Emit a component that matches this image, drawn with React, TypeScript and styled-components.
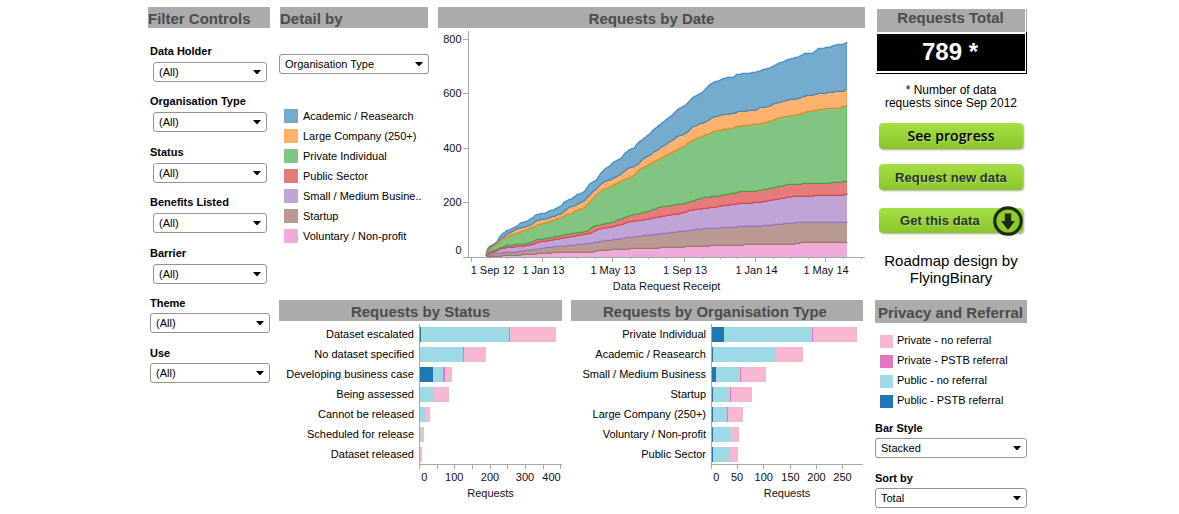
import React from 'react';
import styled, { createGlobalStyle } from 'styled-components';

const GlobalStyle = createGlobalStyle`
  * { box-sizing: border-box; }
  body { margin: 0; background: #fff; overflow: hidden; }
`;

const Page = styled.main`
  display: flex;
  width: 1179px;
  height: 514px;
  padding: 7px 0 0 148px;
  background: #fff;
  color: #000;
  font: 11px/12px "Liberation Sans", Arial, sans-serif;
  white-space: nowrap;
`;

const Heading = styled.h2<{ $align?: string; $h?: number; $shift?: number }>`
  margin: 0;
  height: ${p => p.$h ?? 21}px;
  padding-right: ${p => p.$shift ?? 0}px;
  line-height: ${p => (p.$h ?? 21) + 3}px;
  background: #ababab;
  color: #4b4b4b;
  font-size: 15px;
  font-weight: 700;
  text-align: ${p => p.$align ?? 'center'};
`;

const FilterColumn = styled.aside`
  width: 122px;
  margin-right: 9px;
`;

const Filter = styled.div<{ $top: number; $labelH?: number; $indent?: number; $left?: number }>`
  margin: ${p => p.$top}px 0 0 ${p => p.$left ?? 2}px;
  display: grid;
  grid-template-rows: ${p => p.$labelH ?? 17}px 20px;
  > :last-child { margin-left: ${p => p.$indent ?? 0}px; }
`;

const FilterLabel = styled.label`
  font-weight: 700;
`;

const SelectBox = styled.div<{ $width: number }>`
  display: flex;
  align-items: center;
  justify-content: space-between;
  width: ${p => p.$width}px;
  height: 20px;
  padding: 0 5px;
  border: 1px solid #949494;
  border-radius: 3px;
  background: #fff;
`;

const Select = ({ value, width }: { value: string; width: number }) => (
  <SelectBox $width={width}>
    <span>{value}</span>
    <svg width="8" height="4" viewBox="0 0 8 4"><path d="M0 0H8L4.5 4H3.5Z" fill="#000" /></svg>
  </SelectBox>
);

const Center = styled.div`
  width: 586px;
  margin-right: 10px;
`;

const TopRow = styled.div`
  display: flex;
  justify-content: space-between;
  height: 293px;
`;

const DetailPanel = styled.section`
  width: 150px;
  > ${Heading} { margin: 0 1px 26px; }
`;

const DatePanel = styled.section`
  width: 427px;
`;

const Legend = styled.ul<{ $size: number; $gap: number }>`
  list-style: none;
  margin: 0;
  padding: 0;
  li {
    display: flex;
    align-items: center;
    gap: ${p => p.$gap}px;
    height: 20px;
  }
  i {
    width: ${p => p.$size}px;
    height: ${p => p.$size}px;
  }
`;

const DetailLegend = styled(Legend)`
  margin: 32px 0 0 5px;
`;

const PrivacyLegend = styled(Legend)`
  margin: 8px 0 0 5px;
  span { margin-top: -2px; }
`;

const Swatch = styled.i<{ $color: string }>`
  background: ${p => p.$color};
`;

const BottomRow = styled.div`
  display: flex;
  gap: 9px;
`;

const BarPanel = styled.section<{ $width: number }>`
  width: ${p => p.$width}px;
`;

const Rows = styled.div`
  display: grid;
  grid-template-columns: 140px 1fr;
  margin-top: 3px;
`;

const RowLabels = styled.div`
  padding-right: 5px;
  text-align: right;
  line-height: 20px;
`;

const Plot = styled.div`
  height: 140px;
  border-left: 1px solid #a8a8a8;
`;

const Bar = styled.div`
  display: flex;
  height: 15px;
  margin: 3px 0 5px;
`;

const Segment = styled.span<{ $color: string; $width: number }>`
  width: ${p => p.$width}px;
  background: ${p => p.$color};
`;

const Side = styled.aside`
  width: 152px;
`;

const TotalTop = styled.div`
  margin: 2px 0 0 2px;
  height: 23px;
  width: 150px;
  padding-right: 1px;
  border-right: 1px solid #ababab;
  > ${Heading} { line-height: 18px; }
`;

const TotalFrame = styled.div`
  width: 151px;
  height: 42px;
  margin-left: 1px;
  padding: 2px 1px 2px 1px;
  border-right: 1px solid #000;
  border-bottom: 1px solid #000;
`;

const TotalValue = styled.div`
  height: 37px;
  padding-right: 2px;
  background: #000;
  color: #fff;
  font-size: 24px;
  font-weight: 700;
  line-height: 35px;
  text-align: center;
`;

const Note = styled.p`
  margin: 10px 0 0;
  font-size: 12px;
  line-height: 13px;
  text-align: center;
`;

const Credit = styled.p`
  margin: 19px 0 14px;
  font-size: 15px;
  line-height: 17px;
  text-align: center;
`;

const Button = styled.button<{ $top: number; $h: number }>`
  display: flex;
  align-items: center;
  justify-content: center;
  width: 144px;
  height: ${p => p.$h}px;
  margin: ${p => p.$top}px 0 0 4px;
  padding: 0;
  border: 0;
  border-radius: 4px;
  background: linear-gradient(#a5df43, #8ac52a);
  box-shadow: 1px 1px 2px rgba(0, 0, 0, 0.35);
  color: #2c3222;
  font: 700 13px "Liberation Sans", Arial, sans-serif;
  letter-spacing: 0.08px;
  text-shadow: 1px 1px 1px rgba(255, 255, 255, 0.35);
`;

const ProgressButton = styled(Button)`
  padding-bottom: 2px;
  color: #000;
  font: 600 14px "Open Sans", "Noto Sans", sans-serif;
`;

const DownloadButton = styled(Button)`
  justify-content: flex-start;
  padding-left: 21px;
  gap: 13px;
  svg { flex: none; }
`;

const C = { pn: '#f7b6d2', pp: '#e377c2', un: '#9edae5', up: '#1f77b4' };

const AREA_LEGEND: [string, string][] = [
  ['Academic / Reasearch', '#76abd0'],
  ['Large Company (250+)', '#ffb26e'],
  ['Private Individual', '#80c680'],
  ['Public Sector', '#e67b7c'],
  ['Small / Medium Busine..', '#bea4d7'],
  ['Startup', '#b99a93'],
  ['Voluntary / Non-profit', '#eeabda'],
];

const PRIVACY: [string, string][] = [
  ['Private - no referral', C.pn],
  ['Private - PSTB referral', C.pp],
  ['Public - no referral', C.un],
  ['Public - PSTB referral', C.up],
];

/* Upper edge of each stacked band, from the top band to the bottom one. */
const AREAS = [
  { fill: '#76abd0', line: '#4a8fc3', pts: '486,254 487,249 489,247 491,245 495,243 498,240 500,236 503,233 507,230 511,229 517,226 520,223 527,221 532,218 537,214 545,213 549,211 555,209 561,206 565,201 571,199 576,195 585,191 590,183 596,180 603,170 608,167 613,162 620,159 624,154 630,149 634,148 638,143 645,137 648,135 655,128 663,122 673,114 679,108 685,105 693,97 702,92 707,88 711,83 717,81 727,77 734,76.5 737,74 747,73 760,71 763,69 769,68 775,64.5 783,61.5 787,59.5 797,57 806,53 813,52.5 819,48 830,47 834,45 844,43.5 847,42' },
  { fill: '#ffb26e', line: '#4f86ac', pts: '486,255 488,250 492,246 498,241 502,238 510,232 519,228 530,225 537,220 545,219 555,215.5 562,213 567,208.5 577,204 585,200 593,191.5 598,187 603,182.5 613,178 618,176 628,168 637,165 645,157 650,154.5 657,150 668,142.5 679,135.5 686,133 693,126.5 703,122.5 712,117.5 725,114 735,113 737,111.5 757,109.5 759,107.5 770,106 775,103 790,99 797,98.5 807,95 813,95 817,93.5 840,91 844,91 847,89' },
  { fill: '#80c680', line: '#dc8c22', pts: '486,256 489,250 492,248 498,242 502,239 510,235 525,230 540,224 552,220.5 563,216.5 577,210.5 586,206 593,198 602,190 613,185.5 623,180 634,175 642,167.5 652,162.5 667,155 677,150 684,146 692,140 710,133 715,131 733,127.5 736,126 757,124 768,122 775,118.5 793,115 800,114 807,111 813,111 818,109 840,107.5 847,105' },
  { fill: '#e67b7c', line: '#4a9c4a', pts: '486,256 490,252 498,248.5 507,245 527,243.5 537,239.5 553,237 568,234 587,231 593,226 612,222 630,215.5 648,211 662,206.5 685,203 703,197.5 720,195.5 740,191.5 757,190.5 773,187.5 788,184.5 810,183 830,182.5 847,181' },
  { fill: '#bea4d7', line: '#d5484e', pts: '486,256 490,253 502,248 530,245 537,242 557,239 577,235.5 590,233 600,228.5 612,226.5 630,221.5 648,219 662,216 682,213 690,210 720,206 737,203.5 760,202 773,199.5 790,196.5 827,195 843,195 847,193.5' },
  { fill: '#b99a93', line: '#9873bb', pts: '486,257 493,253 513,252 540,248.5 553,246.5 573,245 593,242.5 612,239.5 630,237 648,235 673,232 703,228.5 737,226.5 763,225.5 783,223.5 800,222 847,221.5' },
  { fill: '#eeabda', line: '#a0756c', pts: '486,257 490,256 513,255 537,253.5 558,252 590,252 600,250 630,248.5 660,247.5 685,246.5 710,245.5 743,244.5 745,244 795,243.5 800,242.5 847,242' },
];

const steppedEdge = (pts: string) => {
  const p = pts.split(' ').map(s => s.split(',').map(Number));
  const out: string[] = [];
  let k = 0;
  for (let x = p[0][0]; x <= 847; x += 1.9) {
    while (k < p.length - 2 && p[k + 1][0] < x) k++;
    const [x0, y0] = p[k];
    const [x1, y1] = p[k + 1];
    const y = y0 + ((y1 - y0) * (x - x0)) / (x1 - x0);
    out.push(`${x.toFixed(1)} ${Math.round(y) + 0.3}`);
  }
  out.push(`847 ${p[p.length - 1][1]}`);
  return 'M' + out.join('L');
};

const MAJOR = [471, 542, 612, 684, 755, 825];
const MINOR = [489, 507, 524, 560, 577, 595, 630, 648, 666, 702, 720, 737, 773, 790, 808, 843, 861];
const X_LABELS: [string, number][] = [['1 Sep 12', 492.7], ['1 Jan 13', 543.5], ['1 May 13', 613], ['1 Sep 13', 685], ['1 Jan 14', 756.5], ['1 May 14', 826]];
const Y_LABELS: [string, number, number][] = [['800', 43, 39], ['600', 97, 93], ['400', 152, 148], ['200', 206, 202], ['0', 254, 257]];

const ChartSvg = styled.svg`
  display: block;
  font: 11px "Liberation Sans", Arial, sans-serif;
  text { fill: #111; }
`;

const DateChart = () => (
  <ChartSvg width="427" height="266" viewBox="438 28 427 266">
    {AREAS.map(a => {
      const edge = steppedEdge(a.pts);
      return (
        <g key={a.fill}>
          <path d={`${edge}V257H486Z`} fill={a.fill} />
          <path d={edge} fill="none" stroke={a.line} strokeWidth="1.3" strokeLinejoin="round" />
        </g>
      );
    })}
    <path d="M846.5 42V89" stroke="#5d9dcb" />
    <path d="M846.5 89V105" stroke="#f5a04f" />
    <path d="M846.5 105V181" stroke="#66b766" />
    <g stroke="#a8a8a8" shapeRendering="crispEdges">
      <path d="M468.5 31V257M463 257.5H865" />
      {Y_LABELS.map(([t, , y]) => <path key={t} d={`M463 ${y + 0.5}H468`} />)}
      {MAJOR.map(x => <path key={x} d={`M${x + 0.5} 258V262`} />)}
      {MINOR.map(x => <path key={x} d={`M${x + 0.5} 258V259`} />)}
    </g>
    {Y_LABELS.map(([t, y]) => <text key={t} x="461.5" y={y} textAnchor="end">{t}</text>)}
    {X_LABELS.map(([t, x]) => <text key={t} x={x} y="274" textAnchor="middle">{t}</text>)}
    <text x="666.5" y="290" textAnchor="middle">Data Request Receipt</text>
  </ChartSvg>
);

/* Segment widths in pixels: public PSTB, public, private PSTB, private. */
type BarRow = [string, number[]];
const SEG = [C.up, C.un, C.pp, C.pn];

const STATUS: BarRow[] = [
  ['Dataset escalated', [1, 88, 1, 46]],
  ['No dataset specified', [0, 43, 1, 22]],
  ['Developing business case', [13, 10, 2, 7]],
  ['Being assessed', [0, 14, 0, 15]],
  ['Cannot be released', [0, 5, 0, 5]],
  ['Scheduled for release', [0, 1, 0, 3]],
  ['Dataset released', [0, 0, 0, 2]],
];

const ORGS: BarRow[] = [
  ['Private Individual', [12, 88, 1, 44]],
  ['Academic / Reasearch', [1, 63, 0, 27]],
  ['Small / Medium Business', [4, 24, 1, 25]],
  ['Startup', [1, 17, 1, 21]],
  ['Large Company (250+)', [1, 14, 1, 15]],
  ['Voluntary / Non-profit', [1, 18, 0, 8]],
  ['Public Sector', [1, 17, 0, 8]],
];

interface BarChartProps {
  title: string;
  width: number;
  shift?: number;
  rows: BarRow[];
  ticks: number[];
  labels: [string, number][];
  caption: number;
}

const BarChart = ({ title, width, shift, rows, ticks, labels, caption }: BarChartProps) => (
  <BarPanel $width={width}>
    <Heading $shift={shift}>{title}</Heading>
    <Rows>
      <RowLabels>{rows.map(([name]) => <div key={name}>{name}</div>)}</RowLabels>
      <Plot>
        {rows.map(([name, widths]) => (
          <Bar key={name}>
            {widths.map((w, i) => w > 0 && <Segment key={i} $width={w} $color={SEG[i]} />)}
          </Bar>
        ))}
      </Plot>
    </Rows>
    <ChartSvg width={width} height="40" viewBox={`0 0 ${width} 40`}>
      <g stroke="#a8a8a8" shapeRendering="crispEdges">
        <path d={`M140 0.5H${width}`} />
        {ticks.map(x => <path key={x} d={`M${x + 0.5} 0V5`} />)}
      </g>
      {labels.map(([t, x]) => <text key={t} x={x} y="17" textAnchor="middle">{t}</text>)}
      <text x={caption} y="33" textAnchor="middle">Requests</text>
    </ChartSvg>
  </BarPanel>
);

export default function App() {
  return (
    <>
      <GlobalStyle />
      <Page>
        <FilterColumn>
          <Heading $align="left">Filter Controls</Heading>
          <Filter $top={17} $indent={3}><FilterLabel>Data Holder</FilterLabel><Select value="(All)" width={114} /></Filter>
          <Filter $top={13} $indent={3}><FilterLabel>Organisation Type</FilterLabel><Select value="(All)" width={114} /></Filter>
          <Filter $top={14} $indent={3}><FilterLabel>Status</FilterLabel><Select value="(All)" width={114} /></Filter>
          <Filter $top={13} $indent={3}><FilterLabel>Benefits Listed</FilterLabel><Select value="(All)" width={114} /></Filter>
          <Filter $top={14} $indent={3}><FilterLabel>Barrier</FilterLabel><Select value="(All)" width={114} /></Filter>
          <Filter $top={13} $labelH={16}><FilterLabel>Theme</FilterLabel><Select value="(All)" width={120} /></Filter>
          <Filter $top={14} $labelH={16}><FilterLabel>Use</FilterLabel><Select value="(All)" width={120} /></Filter>
        </FilterColumn>

        <Center>
          <TopRow>
            <DetailPanel>
              <Heading $align="left">Detail by</Heading>
              <Select value="Organisation Type" width={150} />
              <DetailLegend $size={14} $gap={5}>
                {AREA_LEGEND.map(([t, c]) => <li key={t}><Swatch $color={c} /><span>{t}</span></li>)}
              </DetailLegend>
            </DetailPanel>
            <DatePanel>
              <Heading>Requests by Date</Heading>
              <DateChart />
            </DatePanel>
          </TopRow>
          <BottomRow>
            <BarChart
              title="Requests by Status" width={283} rows={STATUS}
              ticks={[140, 158, 175, 193, 211, 228, 246, 264, 281]}
              labels={[['0', 145.3], ['100', 175.3], ['200', 211], ['300', 246], ['400', 272.5]]}
              caption={211.5}
            />
            <BarChart
              title="Requests by Organisation Type" width={292} shift={4} rows={ORGS}
              ticks={[140, 166, 192, 219, 245, 271]}
              labels={[['0', 145.3], ['50', 166], ['100', 192.7], ['150', 219.5], ['200', 245.5], ['250', 271.5]]}
              caption={216}
            />
          </BottomRow>
        </Center>

        <Side>
          <TotalTop><Heading $h={23} $shift={1}>Requests Total</Heading></TotalTop>
          <TotalFrame><TotalValue>789 *</TotalValue></TotalFrame>
          <Note>* Number of data<br />requests since Sep 2012</Note>
          <ProgressButton $top={13} $h={26}>See progress</ProgressButton>
          <Button $top={15} $h={26}>Request new data</Button>
          <DownloadButton $top={18} $h={25}>
            <span>Get this data</span>
            <svg width="30" height="30" viewBox="0 0 30 30">
              <circle cx="15" cy="15" r="13.2" fill="#8fcb2c" stroke="#1d2a0b" strokeWidth="3.2" />
              <path d="M11.8 7.5H18.2V15H22L15 24L8 15H11.8Z" fill="#1d2a0b" />
            </svg>
          </DownloadButton>
          <Credit>Roadmap design by<br />FlyingBinary</Credit>
          <Heading $h={23} $shift={1}>Privacy and Referral</Heading>
          <PrivacyLegend $size={13} $gap={4}>
            {PRIVACY.map(([t, c]) => <li key={t}><Swatch $color={c} /><span>{t}</span></li>)}
          </PrivacyLegend>
          <Filter $top={11} $left={0} $labelH={16}><FilterLabel>Bar Style</FilterLabel><Select value="Stacked" width={152} /></Filter>
          <Filter $top={14} $left={0} $labelH={16}><FilterLabel>Sort by</FilterLabel><Select value="Total" width={152} /></Filter>
        </Side>
      </Page>
    </>
  );
}
